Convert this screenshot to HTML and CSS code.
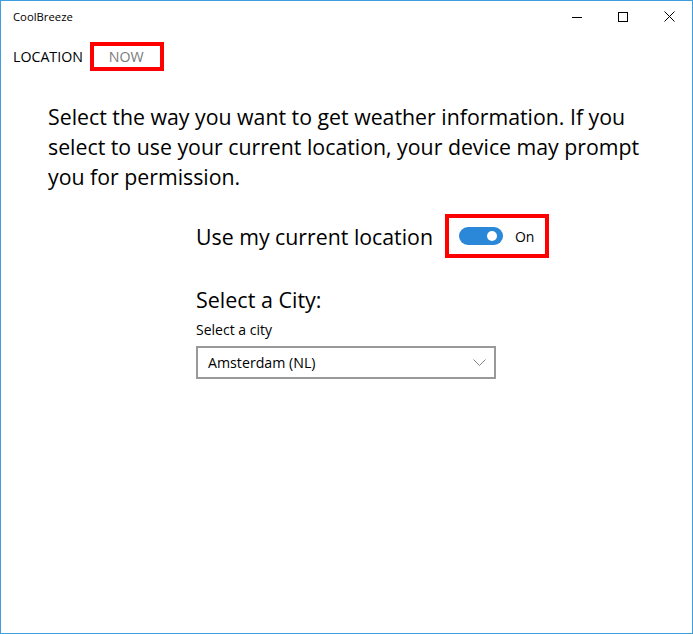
FILE: index.html
```html
<!DOCTYPE html>
<html>
<head>
<meta charset="utf-8">
<link rel="stylesheet" href="styles.css">
</head>
<body>
<div class="window">
  <div class="titlebar">
    <span class="app-title">CoolBreeze</span>
    <div class="controls">
      <span class="ctrl"><svg width="10" height="10" viewBox="0 0 10 10"><path d="M0 5.5H10" stroke="#000" stroke-width="1"/></svg></span>
      <span class="ctrl"><svg width="10" height="10" viewBox="0 0 10 10"><rect x="0.5" y="0.5" width="9" height="9" fill="none" stroke="#000" stroke-width="1"/></svg></span>
      <span class="ctrl"><svg width="11" height="11" viewBox="0 0 11 11"><path d="M0.5 0.5L10.5 10.5M10.5 0.5L0.5 10.5" stroke="#000" stroke-width="1"/></svg></span>
    </div>
  </div>
  <div class="tabs">
    <span class="tab">LOCATION</span>
    <span class="tab tab-now">NOW</span>
  </div>
  <p class="intro">Select the way you want to get weather information. If you select to use your current location, your device may prompt you for permission.</p>
  <div class="settings">
    <div class="loc-row">
      <span class="loc-label">Use my current location</span>
      <div class="toggle-box">
        <span class="track"><span class="knob"></span></span>
        <span class="on">On</span>
      </div>
    </div>
    <div class="city-heading">Select a City:</div>
    <div class="city-label">Select a city</div>
    <div class="combo">
      <span>Amsterdam (NL)</span>
      <svg width="13" height="7" viewBox="0 0 13 7"><path d="M0.5 0.5L6.5 6.5L12.5 0.5" fill="none" stroke="#777" stroke-width="0.9"/></svg>
    </div>
  </div>
</div>
</body>
</html>
```
FILE: styles.css
```css
* { box-sizing: border-box; }
html, body { margin: 0; padding: 0; background: #fff; }
body { font-family: "Open Sans", "Noto Sans", sans-serif; color: #000; }
.window {
  width: 693px;
  height: 634px;
  border: 1px solid #3d9fe0;
  display: flex;
  flex-direction: column;
}
.titlebar {
  height: 31px;
  display: flex;
  align-items: center;
  justify-content: space-between;
}
.app-title { font-size: 11.3px; padding-left: 12px; }
.controls { display: flex; height: 31px; }
.ctrl { width: 46px; display: flex; align-items: center; justify-content: center; }
.tabs {
  display: flex;
  align-items: center;
  height: 30px;
  margin-top: 9px;
  padding-left: 12px;
}
.tab { font-size: 14.2px; }
.tab-now {
  color: #7a7a7a;
  border: 4px solid #f00;
  margin-left: 7px;
  padding: 0 0 0 15px;
  width: 74px;
  height: 29px;
  display: flex;
  align-items: center;
}
.intro {
  margin: 31px 0 0 47px;
  width: 610px;
  font-size: 21.3px;
  line-height: 30px;
}
.settings {
  margin-left: 195px;
  display: flex;
  flex-direction: column;
}
.loc-row {
  display: flex;
  align-items: center;
  margin-top: 22px;
}
.loc-label { font-size: 21.3px; }
.toggle-box {
  margin-left: 12px;
  border: 4px solid #f00;
  width: 104px;
  height: 44px;
  display: flex;
  align-items: center;
  padding-left: 10px;
}
.track {
  width: 44px;
  height: 18px;
  border-radius: 9px;
  background: #2b88d8;
  position: relative;
}
.knob {
  position: absolute;
  width: 10px;
  height: 10px;
  border-radius: 50%;
  background: #fff;
  right: 6px;
  top: 4px;
}
.on { font-size: 14px; margin-left: 12px; }
.city-heading { font-size: 21.5px; margin-top: 27px; }
.city-label { font-size: 14px; margin-top: 6px; }
.combo {
  width: 300px;
  height: 33px;
  border: 2px solid #999;
  margin-top: 7px;
  display: flex;
  align-items: center;
  justify-content: space-between;
  padding: 0 8px 0 10px;
  font-size: 14.2px;
}
```
